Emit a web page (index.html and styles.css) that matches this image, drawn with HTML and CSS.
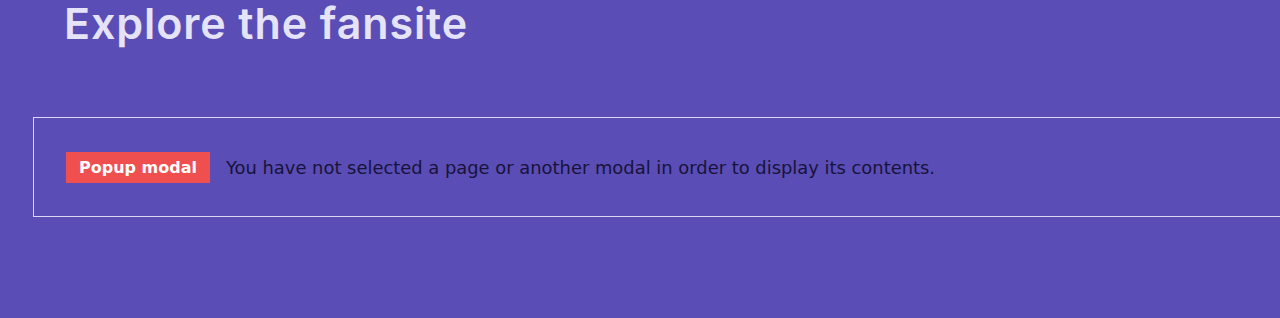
FILE: index.html
```html
<!DOCTYPE html>
<html>
<head>
<meta charset="utf-8">
<link rel="stylesheet" href="styles.css">
</head>
<body>
<div class="page">
  <h1 class="title">Explore the fansite</h1>
  <div class="notice">
    <span class="badge">Popup modal</span>
    <span class="msg">You have not selected a page or another modal in order to display its contents.</span>
  </div>
</div>
</body>
</html>
```
FILE: styles.css
```css
html, body {
  margin: 0;
  padding: 0;
  background: #5a4db5;
  overflow: hidden;
}
.page {
  width: 1280px;
  height: 318px;
  padding-left: 33px;
  box-sizing: border-box;
}
.title {
  margin: 0 0 0 31px;
  font-family: "Inter", "Lato", sans-serif;
  font-weight: 600;
  font-size: 43px;
  line-height: 46px;
  color: #e5e3f8;
  letter-spacing: 0.9px;
}
.notice {
  margin-top: 71px;
  width: 1300px;
  height: 100px;
  box-sizing: border-box;
  border: 1px solid #dcd8f2;
  display: flex;
  align-items: center;
  padding-left: 32px;
  gap: 16px;
  font-family: "DejaVu Sans", Verdana, sans-serif;
  font-size: 16px;
}
.badge {
  background: #ef4f4f;
  color: #ffffff;
  font-weight: bold;
  padding: 0 13px;
  height: 31px;
  line-height: 31px;
}
.msg {
  color: #17133a;
  font-size: 17.9px;
}
```
